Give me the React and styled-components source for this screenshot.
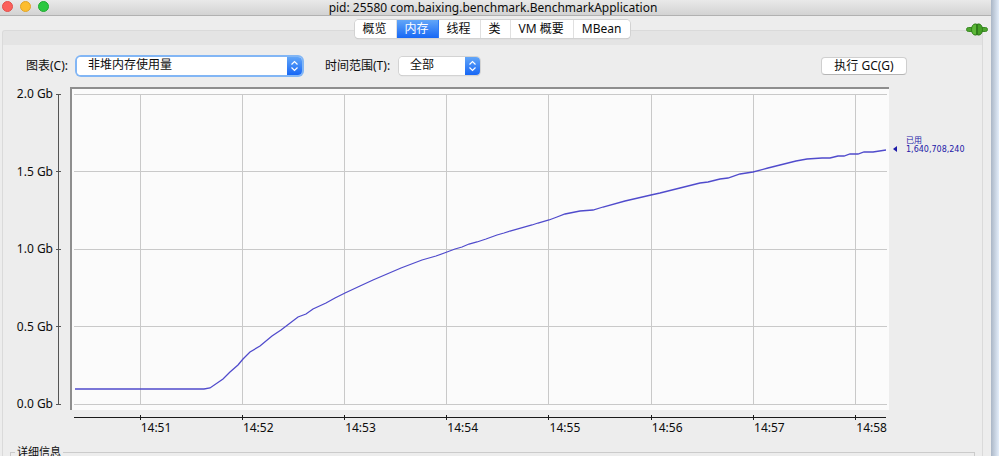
import React, { useState } from "react";
import styled, { createGlobalStyle } from "styled-components";

const ink = '#0c0c0c';
const chrome = '#ededed';
const plotBlue = '#504bcc';
const uiFont = '"Noto Sans", "Noto Sans CJK SC", sans-serif';

const GlobalStyle = createGlobalStyle`
  * {
    box-sizing: border-box;
  }
  body {
    margin: 0;
    background: #dfe9f7;
    color: ${ink};
    font: 12px/16px ${uiFont};
  }
  button, select {
    color: inherit;
    font: inherit;
  }
`;

const Desktop = styled.div`
  height: 100vh;
  overflow: hidden;
  padding-right: 8px;
  background: linear-gradient(to left, #e3edfa, #aab6c6 8px);
`;

const Window = styled.div`
  min-height: 100%;
  background: ${chrome};
`;

const TitleBar = styled.header`
  display: grid;
  grid-template-columns: 1fr auto 1fr;
  height: 16px;
  padding-right: 5px;
  border-bottom: 1px solid #b1b1b1;
  background: linear-gradient(#e9e9e9, #d3d3d3);
`;

const Lights = styled.div`
  display: flex;
  gap: 7px;
  padding: 1px 2px;
`;

const Light = styled.button`
  width: 11px;
  height: 11px;
  padding: 0;
  border: 1px solid ${({ $edge }) => $edge};
  border-radius: 50%;
  background: ${({ $fill }) => $fill};
`;

const Title = styled.h1`
  margin: 0;
  font-size: 12px;
  font-weight: 400;
  line-height: 16px;
`;

const Content = styled.main`
  position: relative;
  padding: 4px 8px 0 2px;
`;

const TabBar = styled.div`
  position: relative;
  display: flex;
  width: max-content;
  height: 18px;
  margin: 0 auto;
  overflow: hidden;
  border-radius: 4px;
  background: #fff;
  box-shadow: 0 0 0 1px #d2d2d2, 0 1px 1px #b5b5b5;
`;

const Tab = styled.button`
  padding: 0 9px 0 8px;
  border: 0;
  border-right: 1px solid #e0e0e0;
  background: #fff;
  line-height: 18px;

  &[aria-selected="true"] {
    border-color: #2f7bf6;
    background: linear-gradient(#62a6f8, #1767f5);
    color: #fff;
  }
  &:last-child {
    border-right: 0;
  }
`;

const Panel = styled.section`
  margin-top: -8px;
  padding-top: 13px;
  border: 1px solid #dadada;
  border-bottom: 0;
  border-radius: 3px 3px 0 0;
  background: linear-gradient(#e4e4e4 14px, ${chrome} 14px);
`;

const Plug = styled.svg`
  position: absolute;
  top: 7px;
  right: 3px;
`;

const Toolbar = styled.form`
  display: flex;
  align-items: center;
  height: 43px;
  padding: 0 75px 0 23px;
`;

const Label = styled.label`
  margin-right: 9px;
`;

const Picker = styled.span`
  display: flex;
  width: ${({ $width }) => $width};
  height: 18px;
  margin-right: 23px;
  overflow: hidden;
  border-radius: 4px;
  background: #fff;
  box-shadow: ${({ $focused }) => $focused
    ? '0 0 0 2px #82b6f5'
    : '0 0 0 1px #d3d3d3, 0 1px 1px #b5b5b5'};
`;

const Select = styled.select`
  flex: 1;
  min-width: 0;
  padding: 0 0 1px 11px;
  border: 0;
  outline: 0;
  background: #fff;
  appearance: none;
`;

const Arrows = styled.svg`
  flex: none;
  width: 15px;
  height: 18px;
  background: linear-gradient(#62a6f8, #1767f5);
`;

const GcButton = styled.button`
  width: 86px;
  height: 18px;
  margin-left: auto;
  padding: 0;
  border: 1px solid #cfcfcf;
  border-bottom-color: #b5b5b5;
  border-radius: 4px;
  background: #fff;
  line-height: 14px;
`;

const Chart = styled.figure`
  display: grid;
  grid-template-columns: 67px 1fr 93px;
  grid-template-rows: 323px auto;
  margin: 0;
`;

const YAxis = styled.div`
  display: flex;
  justify-content: flex-end;
  gap: 3px;
  padding-right: 9px;
`;

const YLabels = styled.div`
  display: flex;
  flex-direction: column;
  justify-content: space-between;
  height: 326px;
  margin-top: -1px;
`;

const Plot = styled.svg`
  width: 100%;
  height: 100%;
  border-top: 2px solid #8e8e8e;
  border-left: 2px solid #8e8e8e;
  background: #fbfbfb;
`;

const Reading = styled.figcaption`
  display: flex;
  align-items: flex-end;
  gap: 9px;
  height: 67px;
  padding-left: 4px;
  color: #1d1aa8;
  font: 8px/9px "DejaVu Sans", "Noto Sans CJK SC", sans-serif;
`;

const XAxis = styled.div`
  grid-column: 2;
  padding: 5px 2px 0 4px;
`;

const XLine = styled.svg`
  display: block;
  width: 100%;
  height: 6px;
`;

const XLabels = styled.div`
  display: flex;
  padding-left: 8.2%;
`;

const XLabel = styled.span`
  flex: 0 0 13.7%;
  line-height: 14px;
`;

const Details = styled.fieldset`
  height: 60px;
  margin: 9px 7px 0;
  padding: 0 4px;
  border: 1px solid #cbcbcb;
`;

const Legend = styled.legend`
  padding: 0 2px;
  font-size: 11px;
`;

const tabs = ['概览', '内存', '线程', '类', 'VM 概要', 'MBean'];
const gigabytes = ['2.0 Gb', '1.5 Gb', '1.0 Gb', '0.5 Gb', '0.0 Gb'];
const times = ['14:51', '14:52', '14:53', '14:54', '14:55', '14:56', '14:57', '14:58'];

// plot units: 817 x 321
const rows = [5, 82, 160, 237, 315];
const columns = [69, 171, 273, 375, 477, 580, 682, 784];
const usage = [
  [3, 300], [132, 300], [138, 299], [151, 290], [158, 283], [166, 276],
  [171, 270], [178, 263], [188, 257], [200, 247], [209, 241], [226, 228],
  [234, 225], [241, 220], [254, 214], [263, 209], [273, 204], [288, 197],
  [301, 191], [315, 185], [329, 179], [350, 171], [364, 167], [375, 163],
  [383, 160], [390, 158], [397, 155], [405, 153], [414, 150], [425, 146],
  [432, 144], [438, 142], [460, 136], [466, 134], [477, 131], [485, 128],
  [493, 125], [508, 122], [521, 121], [531, 118], [553, 112], [579, 106],
  [588, 104], [608, 99], [628, 94], [636, 93], [648, 90], [656, 89],
  [668, 85], [681, 83], [696, 79], [708, 76], [724, 72], [735, 70],
  [750, 69], [758, 69], [766, 67], [772, 67], [778, 65], [786, 65],
  [792, 63], [801, 63], [814, 61],
];

const Dropdown = ({ id, width, focused, options }) => (
  <Picker $width={width} $focused={focused}>
    <Select id={id}>
      {options.map(option => <option key={option}>{option}</option>)}
    </Select>
    <Arrows viewBox="0 0 15 18" fill="none" stroke="#fff" strokeWidth="1.2" aria-hidden="true">
      <path d="M4.5 7.5 7.5 4.5l3 3M4.5 10.5l3 3 3-3" />
    </Arrows>
  </Picker>
);

const MemoryChart = () => (
  <Chart>
    <YAxis>
      <YLabels>
        {gigabytes.map(value => <span key={value}>{value}</span>)}
      </YLabels>
      <svg width="5" height="323" stroke="#555" shapeRendering="crispEdges" aria-hidden="true">
        <path d="M2.5 7v311" />
        {rows.map(y => <path key={y} d={`M0 ${y + 2.5}h5`} />)}
      </svg>
    </YAxis>
    <Plot viewBox="0 0 817 321" preserveAspectRatio="none" fill="none">
      <g stroke="#c9c9c9" shapeRendering="crispEdges">
        {rows.map(y => <path key={y} d={`M2 ${y + 0.5}H815`} />)}
        {columns.map(x => <path key={x} d={`M${x - 0.5} 5V315`} />)}
      </g>
      <polyline points={usage.join(' ')} stroke={plotBlue} strokeWidth="1.3" />
    </Plot>
    <Reading>
      <svg width="4" height="9" fill="#1d1aa8" aria-hidden="true">
        <path d="M4 1v6L0 4z" />
      </svg>
      <span>已用<br />1,640,708,240</span>
    </Reading>
    <XAxis>
      <XLine viewBox="0 0 813 6" preserveAspectRatio="none" stroke="#1a1a1a" shapeRendering="crispEdges" aria-hidden="true">
        <path d="M0 2.5h812" />
        {columns.map(x => <path key={x} d={`M${x - 2.5} 0v5`} />)}
      </XLine>
      <XLabels>
        {times.map(time => <XLabel key={time}>{time}</XLabel>)}
      </XLabels>
    </XAxis>
  </Chart>
);

const App = () => {
  const [active, setActive] = useState('内存');

  return (
    <Desktop>
      <GlobalStyle />
      <Window>
        <TitleBar>
          <Lights>
            <Light $fill="#fb605b" $edge="#e2504b" aria-label="关闭" />
            <Light $fill="#fcbd2f" $edge="#e0a428" aria-label="最小化" />
            <Light $fill="#2bc840" $edge="#1faa31" aria-label="缩放" />
          </Lights>
          <Title>pid: 25580 com.baixing.benchmark.BenchmarkApplication</Title>
        </TitleBar>
        <Content>
          <TabBar role="tablist">
            {tabs.map(tab => (
              <Tab
                key={tab}
                role="tab"
                aria-selected={tab === active}
                onClick={() => setActive(tab)}
              >
                {tab}
              </Tab>
            ))}
          </TabBar>
          <Panel>
            <Toolbar onSubmit={event => event.preventDefault()}>
              <Label htmlFor="chart">图表(C):</Label>
              <Dropdown id="chart" width="225px" focused options={['非堆内存使用量', '堆内存使用量']} />
              <Label htmlFor="range">时间范围(T):</Label>
              <Dropdown id="range" width="81px" options={['全部', '1 小时']} />
              <GcButton type="submit">执行 GC(G)</GcButton>
            </Toolbar>
            <MemoryChart />
            <Details>
              <Legend>详细信息</Legend>
            </Details>
          </Panel>
          <Plug width="22" height="14" viewBox="0 0 22 14" aria-hidden="true">
            <rect x="0.5" y="4.5" width="21" height="4" rx="2" fill="#4da52e" stroke="#3b8a25" />
            <path d="M10.5 1H9C7 1 5.5 3.5 5.5 6.5S7 12 9 12h1.5z" fill="#5cb838" stroke="#2f7d1a" />
            <path d="M11.5 1H13c2 0 3.5 2.5 3.5 5.5S15 12 13 12h-1.5z" fill="#45a026" stroke="#2f7d1a" />
          </Plug>
        </Content>
      </Window>
    </Desktop>
  );
};

export default App;
